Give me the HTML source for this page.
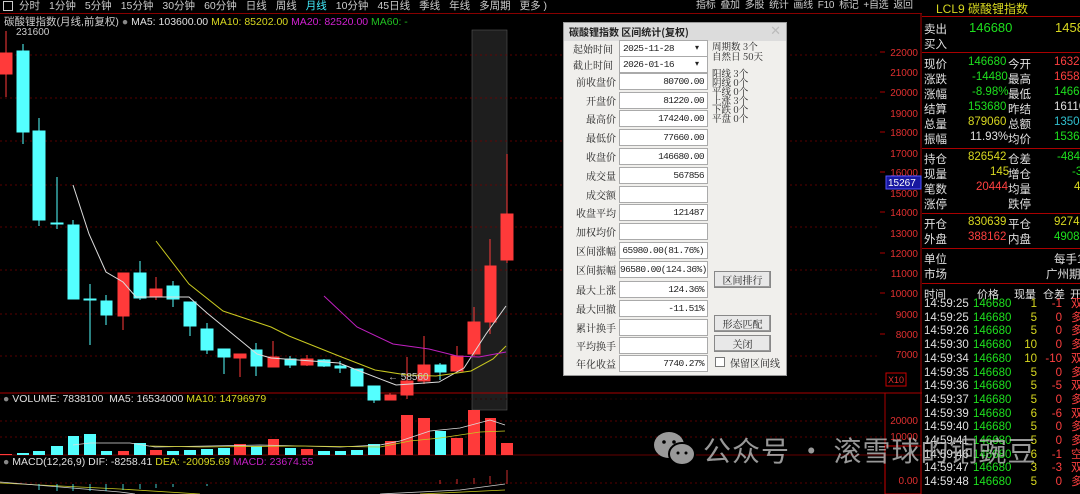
<!DOCTYPE html>
<html><head><meta charset="utf-8"><style>
*{margin:0;padding:0;box-sizing:border-box}
body{width:1080px;height:494px;background:#000;overflow:hidden;position:relative;font-family:"Liberation Sans","Noto Sans CJK SC",sans-serif;font-size:11px;color:#ccc}
.a{position:absolute;white-space:nowrap}
.tb span{margin-right:9px}
.dlg{position:absolute;left:563px;top:22px;width:224px;height:354px;background:#f0efec;border:1px solid #999;font-family:"Noto Serif CJK SC","Liberation Serif",serif;color:#222;font-size:10px}
.dlg .t{position:absolute;left:0;top:0;width:100%;height:18px;background:#dcdcdc;font-family:"Noto Sans CJK SC",sans-serif;font-weight:bold;font-size:10px;padding:3px 5px;line-height:12px}
.lb{position:absolute;width:50px;text-align:right;left:2px;line-height:15px}
.in{position:absolute;left:55px;width:89px;height:17px;background:#fff;border:1px solid #aaa;text-align:right;padding:0 3px 0 0;font-family:"Liberation Mono",monospace;font-size:9.5px;letter-spacing:-0.6px;line-height:15px;overflow:hidden}
.bt{position:absolute;left:150px;width:57px;height:17px;border:1px solid #888;background:#e8e8e8;text-align:center;line-height:15px;box-shadow:inset -1px -1px #999}
.r{color:#ff4040}.g{color:#1ee01e}.y{color:#d8d820}.w{color:#e0e0e0}.c{color:#30c0d0}
.ip div{position:absolute;white-space:nowrap;font-size:11.5px}
</style></head><body>
<div class="a tb" style="left:0;top:0;width:922px;height:14px;border-bottom:1px solid #800;font-size:10.5px;color:#ccc;line-height:12px">
<span style="border:1px solid #ccc;display:inline-block;width:10px;height:10px;margin:1px 6px 0 3px;vertical-align:top"></span><span>分时</span><span>1分钟</span><span>5分钟</span><span>15分钟</span><span>30分钟</span><span>60分钟</span><span>日线</span><span>周线</span><span style="color:#4ef">月线</span><span>10分钟</span><span>45日线</span><span>季线</span><span>年线</span><span>多周期</span><span>更多 )</span></div>
<div class="a" style="left:696px;top:0;font-size:10px;color:#ccc;line-height:12px;letter-spacing:-0.3px">指标 &nbsp;叠加 &nbsp;多股 &nbsp;统计 &nbsp;画线 &nbsp;F10 &nbsp;标记 &nbsp;+自选 &nbsp;返回</div>
<div class="a" style="left:4px;top:14px;font-size:10.5px">碳酸锂指数(月线,前复权) <span style="color:#888">●</span> <span class="w">MA5: 103600.00</span> <span class="y">MA10: 85202.00</span> <span style="color:#d020d0">MA20: 82520.00</span> <span style="color:#20c020">MA60: -</span></div>
<div class="a" style="left:16px;top:27px;font-size:10px;color:#ccc">231600</div>
<svg class="a" style="left:0;top:0" width="922" height="494">
<rect x="472" y="30" width="35" height="380" fill="#1e1e1e" stroke="#555" stroke-width="0.6"/>
<g stroke="#700" stroke-dasharray="2,3" stroke-width="0.8">
<line x1="0" y1="55" x2="880" y2="55"/><line x1="0" y1="98" x2="880" y2="98"/><line x1="0" y1="141" x2="880" y2="141"/><line x1="0" y1="185" x2="880" y2="185"/><line x1="0" y1="227" x2="880" y2="227"/><line x1="0" y1="270" x2="880" y2="270"/><line x1="0" y1="314" x2="880" y2="314"/><line x1="0" y1="356" x2="880" y2="356"/><line x1="0" y1="399" x2="880" y2="399" stroke="#300"/>
<line x1="0" y1="421" x2="885" y2="421"/><line x1="0" y1="437" x2="885" y2="437"/><line x1="0" y1="483" x2="885" y2="483"/>
</g>
<line x1="0" y1="393" x2="922" y2="393" stroke="#a00"/>
<line x1="0" y1="455" x2="922" y2="455" stroke="#600"/>
<line x1="921" y1="14" x2="921" y2="494" stroke="#a00"/>
<line x1="885" y1="393" x2="885" y2="494" stroke="#a00"/>
<rect x="885" y="446" width="36" height="48" fill="none" stroke="#c00"/>
<g stroke="#a00"><line x1="880" y1="52" x2="885" y2="52"/><line x1="880" y1="92" x2="885" y2="92"/><line x1="880" y1="132" x2="885" y2="132"/><line x1="880" y1="172" x2="885" y2="172"/><line x1="880" y1="212" x2="885" y2="212"/><line x1="880" y1="253" x2="885" y2="253"/><line x1="880" y1="293" x2="885" y2="293"/><line x1="880" y1="334" x2="885" y2="334"/></g>
<g font-family="Liberation Sans" font-size="10" fill="#e03030" text-anchor="end">
<text x="918" y="56">22000</text><text x="918" y="76">21000</text><text x="918" y="96">20000</text><text x="918" y="117">19000</text><text x="918" y="136">18000</text><text x="918" y="157">17000</text><text x="918" y="176">16000</text><text x="918" y="197">15000</text><text x="918" y="216">14000</text><text x="918" y="237">13000</text><text x="918" y="257">12000</text><text x="918" y="277">11000</text><text x="918" y="297">10000</text><text x="918" y="318">9000</text><text x="918" y="338">8000</text><text x="918" y="358">7000</text>
<text x="918" y="424">20000</text><text x="918" y="440">10000</text><text x="918" y="484">0.00</text>
</g>
<rect x="886" y="176" width="35" height="13" fill="#1818a0" stroke="#55f"/><text x="888" y="186" font-family="Liberation Sans" font-size="10" fill="#fff">15267</text>
<rect x="886" y="373" width="20" height="13" fill="none" stroke="#c00"/><text x="888" y="383" font-family="Liberation Sans" font-size="9" fill="#e03030">X10</text>
<g stroke="#ff3a3a" fill="#ff3a3a">
<line x1="6" y1="31" x2="6" y2="97"/><rect x="0" y="53" width="12" height="21"/>
<line x1="123" y1="273" x2="123" y2="330"/><rect x="118" y="273" width="11" height="43"/>
<line x1="156" y1="277" x2="156" y2="300"/><rect x="150" y="289" width="12" height="8"/>
<line x1="240" y1="354" x2="240" y2="377"/><rect x="234" y="354" width="12" height="4"/>
<line x1="273" y1="341" x2="273" y2="367"/><rect x="268" y="357" width="11" height="10"/>
<line x1="307" y1="355" x2="307" y2="366"/><rect x="301" y="359" width="12" height="6"/>
<line x1="390" y1="393" x2="390" y2="400"/><rect x="385" y="395" width="11" height="5"/>
<line x1="407" y1="357" x2="407" y2="399"/><rect x="401" y="381" width="12" height="14"/>
<line x1="424" y1="336" x2="424" y2="384"/><rect x="418" y="365" width="12" height="16"/>
<line x1="457" y1="346" x2="457" y2="371"/><rect x="451" y="356" width="12" height="15"/>
<line x1="474" y1="307" x2="474" y2="356"/><rect x="468" y="322" width="12" height="32"/>
<line x1="490" y1="239" x2="490" y2="334"/><rect x="485" y="266" width="11" height="56"/>
<line x1="507" y1="154" x2="507" y2="263"/><rect x="501" y="214" width="12" height="46"/>
</g>
<g stroke="#54ffff" fill="#54ffff">
<line x1="23" y1="44" x2="23" y2="144"/><rect x="17" y="51" width="12" height="81"/>
<line x1="39" y1="118" x2="39" y2="226"/><rect x="33" y="131" width="12" height="89"/>
<line x1="57" y1="177" x2="57" y2="229"/><rect x="51" y="223" width="12" height="1"/>
<line x1="73" y1="220" x2="73" y2="299"/><rect x="68" y="225" width="11" height="74"/>
<line x1="90" y1="284" x2="90" y2="345"/><rect x="84" y="299" width="12" height="1"/>
<line x1="106" y1="295" x2="106" y2="325"/><rect x="101" y="301" width="11" height="14"/>
<line x1="140" y1="261" x2="140" y2="300"/><rect x="134" y="273" width="12" height="25"/>
<line x1="173" y1="281" x2="173" y2="307"/><rect x="167" y="286" width="12" height="13"/>
<line x1="190" y1="302" x2="190" y2="336"/><rect x="184" y="302" width="12" height="24"/>
<line x1="207" y1="323" x2="207" y2="354"/><rect x="201" y="329" width="12" height="21"/>
<line x1="224" y1="349" x2="224" y2="374"/><rect x="218" y="349" width="12" height="8"/>
<line x1="256" y1="343" x2="256" y2="376"/><rect x="251" y="350" width="11" height="16"/>
<line x1="290" y1="356" x2="290" y2="368"/><rect x="285" y="359" width="11" height="6"/>
<line x1="324" y1="359" x2="324" y2="367"/><rect x="318" y="360" width="12" height="6"/>
<line x1="340" y1="361" x2="340" y2="373"/><rect x="335" y="366" width="11" height="2"/>
<rect x="351" y="369" width="12" height="17"/>
<line x1="374" y1="386" x2="374" y2="403"/><rect x="368" y="386" width="12" height="14"/>
<line x1="440" y1="363" x2="440" y2="380"/><rect x="435" y="365" width="11" height="7"/>
</g>
<polyline fill="none" stroke="#ddd" stroke-width="1" points="73,185 89,234 106,272 123,282 136,297 189,297 207,313 257,354 271,358 339,363 357,370 396,385 439,382 464,368 486,334 506,306"/>
<polyline fill="none" stroke="#c8c820" stroke-width="1" points="156,241 189,284 223,311 271,327 289,336 339,356 375,370 407,375 436,376 471,371 493,359 506,346"/>
<polyline fill="none" stroke="#c020c0" stroke-width="1" points="324,296 357,327 393,344 429,349 457,356 479,357 506,352"/>
<g fill="#ff3a3a"><rect x="0" y="454" width="12" height="1"/><rect x="118" y="451" width="11" height="4"/><rect x="150" y="450" width="12" height="5"/><rect x="234" y="444" width="12" height="11"/><rect x="268" y="439" width="11" height="16"/><rect x="301" y="449" width="12" height="6"/><rect x="385" y="441" width="11" height="14"/><rect x="401" y="415" width="12" height="40"/><rect x="418" y="418" width="12" height="37"/><rect x="451" y="438" width="12" height="17"/><rect x="468" y="410" width="12" height="45"/><rect x="485" y="418" width="11" height="37"/><rect x="501" y="443" width="12" height="12"/></g>
<g fill="#54ffff"><rect x="17" y="453" width="12" height="2"/><rect x="33" y="451" width="12" height="4"/><rect x="51" y="446" width="12" height="9"/><rect x="68" y="436" width="11" height="19"/><rect x="84" y="434" width="12" height="21"/><rect x="101" y="451" width="11" height="4"/><rect x="134" y="443" width="12" height="12"/><rect x="167" y="451" width="12" height="4"/><rect x="184" y="450" width="12" height="5"/><rect x="201" y="449" width="12" height="6"/><rect x="218" y="448" width="12" height="7"/><rect x="251" y="446" width="11" height="9"/><rect x="285" y="448" width="11" height="7"/><rect x="318" y="451" width="12" height="4"/><rect x="335" y="451" width="11" height="4"/><rect x="351" y="450" width="12" height="5"/><rect x="368" y="444" width="12" height="11"/><rect x="435" y="431" width="11" height="24"/></g>
<polyline fill="none" stroke="#ddd" stroke-width="0.8" points="73,445 90,443 130,443 155,447 260,445 340,447 380,445 400,441 430,431 460,428 490,420 505,425"/>
<polyline fill="none" stroke="#c8c820" stroke-width="0.8" points="150,446 200,447 300,446 380,447 410,441 440,438 480,432 505,431"/>
<polyline fill="none" stroke="#c8c820" stroke-width="0.8" points="0,483 60,486 120,489 200,494"/>
<polyline fill="none" stroke="#ccc" stroke-width="0.8" points="0,482 60,487 120,492 135,494"/>
<polyline fill="none" stroke="#ccc" stroke-width="0.8" points="380,494 460,490 505,484"/>
<polyline fill="none" stroke="#c8c820" stroke-width="0.8" points="420,494 505,490"/>
<g stroke="#54ffff" stroke-width="0.8"><line x1="39" y1="484" x2="39" y2="490"/><line x1="57" y1="484" x2="57" y2="491"/><line x1="73" y1="484" x2="73" y2="491"/><line x1="90" y1="484" x2="90" y2="491"/><line x1="106" y1="484" x2="106" y2="491"/><line x1="123" y1="484" x2="123" y2="490"/><line x1="140" y1="484" x2="140" y2="489"/><line x1="156" y1="484" x2="156" y2="488"/><line x1="173" y1="484" x2="173" y2="487"/><line x1="207" y1="484" x2="207" y2="486"/></g>
<g stroke="#ff3a3a" stroke-width="0.8"><line x1="440" y1="484" x2="440" y2="480"/><line x1="457" y1="484" x2="457" y2="479"/><line x1="474" y1="484" x2="474" y2="478"/><line x1="490" y1="484" x2="490" y2="476"/><line x1="507" y1="484" x2="507" y2="470"/></g>
</svg>
<div class="a" style="left:388px;top:372px;font-size:10px;color:#ccc">← 58560</div>
<div class="a" style="left:3px;top:393px;font-size:10.5px"><span style="color:#888">●</span> <span class="w">VOLUME: 7838100 &nbsp;MA5: 16534000</span> <span class="y">MA10: 14796979</span></div>
<div class="a" style="left:3px;top:456px;font-size:10.5px"><span style="color:#888">●</span> <span class="w">MACD(12,26,9) DIF: -8258.41</span> <span class="y">DEA: -20095.69</span> <span style="color:#c020c0">MACD: 23674.55</span></div>

<div class="dlg">
<div class="t">碳酸锂指数 区间统计(复权)<span style="position:absolute;right:5px;top:1px;color:#bbb;font-weight:normal;font-size:13px">✕</span></div>
<div class="lb" style="top:18px;width:47px">起始时间</div><div class="in" style="top:17px;text-align:left;padding-left:3px">2025-11-28</div><div class="a" style="left:131px;top:19px;font-size:8px">▾</div>
<div class="lb" style="top:34px;width:47px">截止时间</div><div class="in" style="top:33px;text-align:left;padding-left:3px">2026-01-16</div><div class="a" style="left:131px;top:35px;font-size:8px">▾</div>
<div class="lb" style="top:51px">前收盘价</div><div class="in" style="top:50px">80700.00</div>
<div class="lb" style="top:70px">开盘价</div><div class="in" style="top:69px">81220.00</div>
<div class="lb" style="top:88px">最高价</div><div class="in" style="top:87px">174240.00</div>
<div class="lb" style="top:107px">最低价</div><div class="in" style="top:106px">77660.00</div>
<div class="lb" style="top:126px">收盘价</div><div class="in" style="top:125px">146680.00</div>
<div class="lb" style="top:145px">成交量</div><div class="in" style="top:144px">567856</div>
<div class="lb" style="top:164px">成交额</div><div class="in" style="top:163px"></div>
<div class="lb" style="top:182px">收盘平均</div><div class="in" style="top:181px">121487</div>
<div class="lb" style="top:201px">加权均价</div><div class="in" style="top:200px"></div>
<div class="lb" style="top:220px">区间涨幅</div><div class="in" style="top:219px">65980.00(81.76%)</div>
<div class="lb" style="top:239px">区间振幅</div><div class="in" style="top:238px">96580.00(124.36%)</div>
<div class="lb" style="top:259px">最大上涨</div><div class="in" style="top:258px">124.36%</div>
<div class="lb" style="top:278px">最大回撤</div><div class="in" style="top:277px">-11.51%</div>
<div class="lb" style="top:297px">累计换手</div><div class="in" style="top:296px"></div>
<div class="lb" style="top:315px">平均换手</div><div class="in" style="top:314px"></div>
<div class="lb" style="top:333px">年化收益</div><div class="in" style="top:332px">7740.27%</div>
<div class="a" style="left:148px;top:18px;line-height:10px;font-size:9.5px">周期数 3个<br>自然日 50天</div>
<div class="a" style="left:148px;top:46px;line-height:9px;font-size:9.5px">阳线 3个<br>阴线 0个<br>平线 0个<br>上涨 3个<br>下跌 0个<br>平盘 0个</div>
<div class="bt" style="top:248px">区间排行</div>
<div class="bt" style="top:292px">形态匹配</div>
<div class="bt" style="top:312px">关闭</div>
<div class="a" style="left:151px;top:334px;width:10px;height:10px;background:#fff;border:1px solid #777"></div>
<div class="a" style="left:166px;top:332px">保留区间线</div>
</div>

<div class="ip" style="position:absolute;left:922px;top:0;width:158px;height:494px">
<div class="y" style="left:14px;top:0px;font-size:12px">LCL9 碳酸锂指数</div>
<div style="left:0;top:16px;width:158px;height:1px;background:#a00"></div>
<div class="w" style="left:2px;top:21px">卖出</div><div class="g" style="left:47px;top:20px;font-size:13px">146680</div><div class="y" style="left:133px;top:20px;font-size:13px">1458</div>
<div class="w" style="left:2px;top:36px">买入</div>
<div style="left:0;top:52px;width:158px;height:1px;background:#a00"></div>
<div class="w" style="left:2px;top:56px">现价</div><div class="g" style="left:46px;top:56px">146680</div><div class="w" style="left:86px;top:56px">今开</div><div class="r" style="left:132px;top:56px">16320</div>
<div class="w" style="left:2px;top:71px">涨跌</div><div class="g" style="left:50px;top:71px">-14480</div><div class="w" style="left:86px;top:71px">最高</div><div class="r" style="left:132px;top:71px">16588</div>
<div class="w" style="left:2px;top:86px">涨幅</div><div class="g" style="left:50px;top:86px">-8.98%</div><div class="w" style="left:86px;top:86px">最低</div><div class="g" style="left:132px;top:86px">14666</div>
<div class="w" style="left:2px;top:101px">结算</div><div class="g" style="left:46px;top:101px">153680</div><div class="w" style="left:86px;top:101px">昨结</div><div class="w" style="left:132px;top:101px">16116</div>
<div class="w" style="left:2px;top:116px">总量</div><div class="y" style="left:46px;top:116px">879060</div><div class="w" style="left:86px;top:116px">总额</div><div class="c" style="left:132px;top:116px">13504</div>
<div class="w" style="left:2px;top:131px">振幅</div><div class="w" style="left:48px;top:131px">11.93%</div><div class="w" style="left:86px;top:131px">均价</div><div class="g" style="left:132px;top:131px">15364</div>
<div style="left:0;top:148px;width:158px;height:1px;background:#a00"></div>
<div class="w" style="left:2px;top:151px">持仓</div><div class="y" style="left:46px;top:151px">826542</div><div class="w" style="left:86px;top:151px">仓差</div><div class="g" style="left:135px;top:151px">-4842</div>
<div class="w" style="left:2px;top:166px">现量</div><div class="y" style="left:68px;top:166px">145</div><div class="w" style="left:86px;top:166px">增仓</div><div class="g" style="left:150px;top:166px">-3</div>
<div class="w" style="left:2px;top:181px">笔数</div><div class="r" style="left:54px;top:181px">20444</div><div class="w" style="left:86px;top:181px">均量</div><div class="y" style="left:152px;top:181px">4</div>
<div class="w" style="left:2px;top:196px">涨停</div><div class="w" style="left:86px;top:196px">跌停</div>
<div style="left:0;top:213px;width:158px;height:1px;background:#a00"></div>
<div class="w" style="left:2px;top:216px">开仓</div><div class="y" style="left:46px;top:216px">830639</div><div class="w" style="left:86px;top:216px">平仓</div><div class="y" style="left:132px;top:216px">92748</div>
<div class="w" style="left:2px;top:231px">外盘</div><div class="r" style="left:46px;top:231px">388162</div><div class="w" style="left:86px;top:231px">内盘</div><div class="g" style="left:132px;top:231px">49089</div>
<div style="left:0;top:248px;width:158px;height:1px;background:#a00"></div>
<div class="w" style="left:2px;top:251px">单位</div><div class="w" style="left:132px;top:251px">每手1(</div>
<div class="w" style="left:2px;top:266px">市场</div><div class="w" style="left:124px;top:266px">广州期</div>
<div style="left:0;top:283px;width:158px;height:1px;background:#a00"></div>
<div class="w" style="left:2px;top:286px;font-size:11px">时间</div><div class="w" style="left:55px;top:286px;font-size:11px">价格</div><div class="w" style="left:92px;top:286px;font-size:11px">现量</div><div class="w" style="left:121px;top:286px;font-size:11px">仓差</div><div class="w" style="left:148px;top:286px;font-size:11px">开</div>
</div>
<div class="a" style="left:924px;top:298px;font-size:11.5px;line-height:13.7px;color:#e0e0e0">14:59:25<br>14:59:25<br>14:59:26<br>14:59:30<br>14:59:34<br>14:59:35<br>14:59:36<br>14:59:37<br>14:59:39<br>14:59:40<br>14:59:41<br>14:59:46<br>14:59:47<br>14:59:48</div>
<div class="a g" style="left:973px;top:298px;font-size:11.5px;line-height:13.7px">146680<br>146680<br>146680<br>146680<br>146680<br>146680<br>146680<br>146680<br>146680<br>146680<br>146680<br>146680<br>146680<br>146680</div>
<div class="a y" style="left:1015px;width:22px;text-align:right;top:298px;font-size:11.5px;line-height:13.7px">1<br>5<br>5<br>10<br>10<br>5<br>5<br>5<br>6<br>5<br>5<br>6<br>3<br>5</div>
<div class="a r" style="left:1040px;width:22px;text-align:right;top:298px;font-size:11.5px;line-height:13.7px">-1<br>0<br>0<br>0<br>-10<br>0<br>-5<br>0<br>-6<br>0<br>0<br>-1<br>-3<br>0</div>
<div class="a r" style="left:1071px;top:298px;font-size:11.5px;line-height:13.7px">双<br>多<br>多<br>多<br>双<br>多<br>双<br>多<br>双<br>多<br>多<br>空<br>双<br>多</div>

<svg class="a" style="left:652px;top:430px" width="46" height="38"><ellipse cx="17" cy="15" rx="15" ry="13" fill="#9a9a9a"/><ellipse cx="30" cy="24" rx="13" ry="11" fill="#9a9a9a" stroke="#000" stroke-width="2"/><circle cx="12" cy="12" r="1.8" fill="#000"/><circle cx="22" cy="12" r="1.8" fill="#000"/><circle cx="26" cy="23" r="1.5" fill="#000"/><circle cx="34" cy="23" r="1.5" fill="#000"/></svg>
<div class="a" style="left:703px;top:430px;font-size:28px;color:rgba(190,190,190,0.8);font-family:'Noto Sans CJK SC',sans-serif;letter-spacing:1px">公众号 · 滚雪球的铜豌豆</div>
</body></html>
